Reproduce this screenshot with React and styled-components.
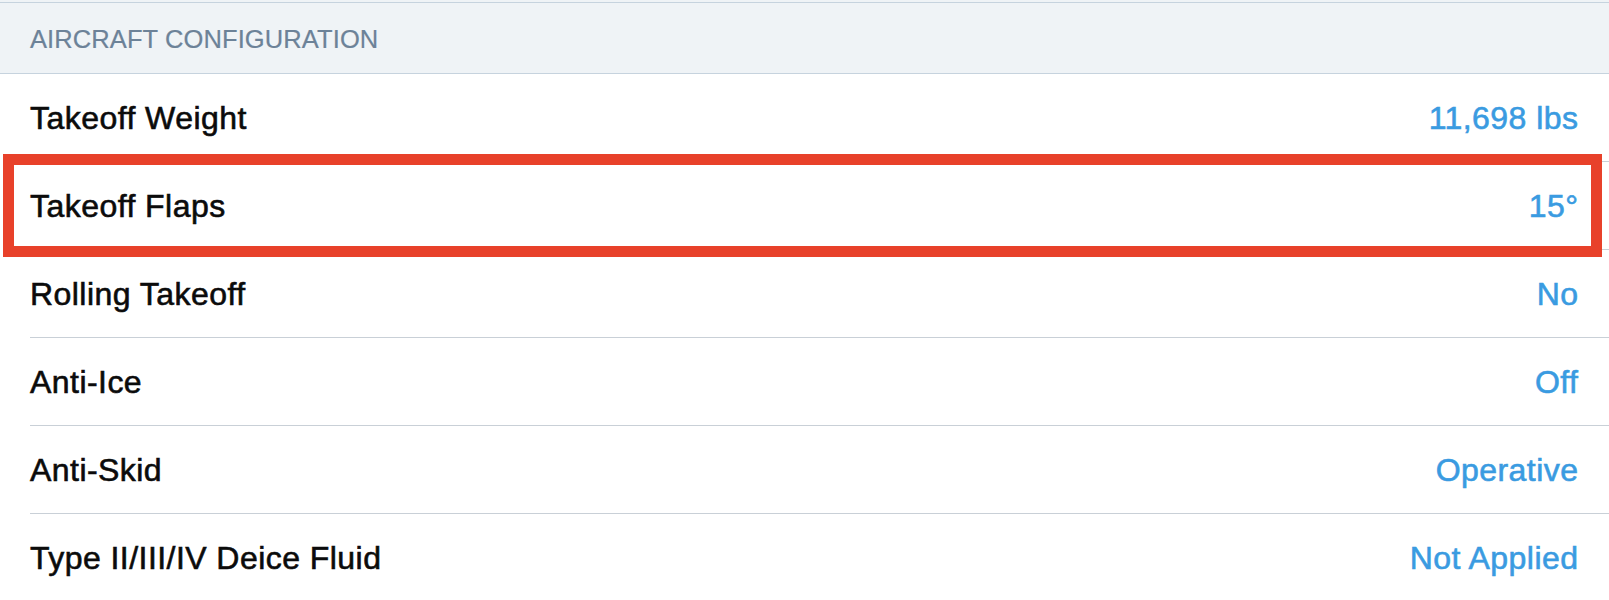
import React from "react";
import styled, { createGlobalStyle } from "styled-components";

const GlobalStyle = createGlobalStyle`
    html, body {
        margin: 0;
        padding: 0;
        background: #ffffff;
    }
    body {
        font-family: "Liberation Sans", Arial, sans-serif;
        -webkit-font-smoothing: antialiased;
    }
`;

const Section = styled.div`
    width: 100%;
    background: #ffffff;
    overflow: hidden;
`;

const HeaderWrap = styled.div`
    background: #eff3f6;
    padding-top: 2px;
`;

const Header = styled.div`
    height: 68px;
    display: flex;
    align-items: center;
    padding: 2px 30px 0;
    border-top: 1px solid #c6d3de;
    border-bottom: 1px solid #c6d3de;
    color: #6c8298;
    font-size: 25.5px;
    letter-spacing: 0.1px;
    text-transform: uppercase;
    -webkit-text-stroke: 0.2px #6c8298;
`;

const List = styled.div`
    display: flex;
    flex-direction: column;
`;

const Row = styled.div`
    position: relative;
    height: 88px;
    display: flex;
    align-items: center;
    justify-content: space-between;
    padding: 0 31px 0 30px;
    box-sizing: border-box;
    &::after {
        content: "";
        position: absolute;
        left: 30px;
        right: 0;
        bottom: 0;
        height: 1px;
        background: ${props => (props.$last ? "transparent" : "#c9d0d7")};
    }
`;

const Label = styled.span`
    color: #0b0b0b;
    font-size: 32px;
    letter-spacing: 0.45px;
    -webkit-text-stroke: 0.6px #0b0b0b;
`;

const Value = styled.span`
    color: #3a9be1;
    font-size: 32px;
    letter-spacing: 0.45px;
    margin-right: -0.45px;
    -webkit-text-stroke: 0.6px #3a9be1;
`;

const Highlight = styled.div`
    position: absolute;
    z-index: 1;
    top: -8px;
    bottom: -7px;
    left: 3px;
    right: 7px;
    border: 11px solid #e8412a;
    pointer-events: none;
`;

const rows = [
    { label: "Takeoff Weight", value: "11,698 lbs" },
    { label: "Takeoff Flaps", value: "15°", marked: true },
    { label: "Rolling Takeoff", value: "No" },
    { label: "Anti-Ice", value: "Off" },
    { label: "Anti-Skid", value: "Operative" },
    { label: "Type II/III/IV Deice Fluid", value: "Not Applied" }
];

export default function App() {
    return (
        <>
            <GlobalStyle />
            <Section>
                <HeaderWrap>
                    <Header>Aircraft Configuration</Header>
                </HeaderWrap>
                <List>
                    {rows.map((row, i) => (
                        <Row key={row.label} $last={i === rows.length - 1}>
                            <Label>{row.label}</Label>
                            <Value>{row.value}</Value>
                            {row.marked && <Highlight />}
                        </Row>
                    ))}
                </List>
            </Section>
        </>
    );
}
